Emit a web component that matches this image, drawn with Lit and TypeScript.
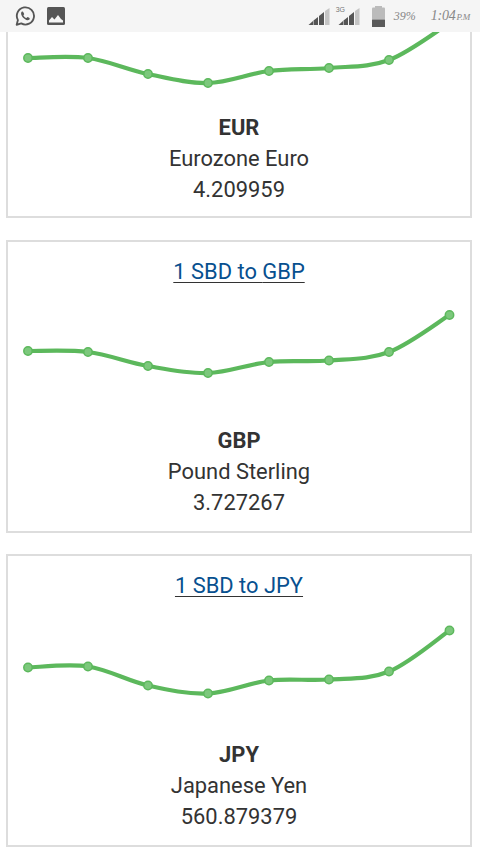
import { LitElement, html, css, svg } from "lit";
import { customElement } from "lit/decorators.js";

const XS = [20, 80, 140, 200, 261, 321, 381, 441.5];

interface Card { code: string; name: string; value: string; ys: number[]; link: boolean; }

const CARDS: Card[] = [
  { code: "EUR", name: "Eurozone Euro", value: "4.209959", ys: [79, 79, 95, 104, 92, 89, 81, 44], link: false },
  { code: "GBP", name: "Pound Sterling", value: "3.727267", ys: [59, 60, 74, 81, 70, 68.5, 60, 23], link: true },
  { code: "JPY", name: "Japanese Yen", value: "560.879379", ys: [61.5, 60.5, 79.5, 87.5, 74.5, 73.5, 65.5, 24.5], link: true },
];

function curve(ys: number[]): string {
  const pts = ys.map((y, i) => [XS[i], y]);
  let d = `M${pts[0][0]} ${pts[0][1]}`;
  for (let i = 0; i < pts.length - 1; i++) {
    const p0 = pts[Math.max(0, i - 1)];
    const p1 = pts[i];
    const p2 = pts[i + 1];
    const p3 = pts[Math.min(pts.length - 1, i + 2)];
    const k = 0.17;
    d += ` C${p1[0] + (p2[0] - p0[0]) * k} ${p1[1] + (p2[1] - p0[1]) * k} ${p2[0] - (p3[0] - p1[0]) * k} ${p2[1] - (p3[1] - p1[1]) * k} ${p2[0]} ${p2[1]}`;
  }
  return d;
}

const signal = svg`
  <polygon points="0.500,17 5,13 5,17" fill="#555"></polygon>
  <polygon points="5.500,17 5.500,12.500 10,9 10,17" fill="#555"></polygon>
  <polygon points="11,17 11,8 16,4 16,17" fill="#555"></polygon>
  <polygon points="17,17 17,3 21.500,0 21.500,17" fill="#c4c4c4"></polygon>
`;

@customElement("app-root")
export class AppRoot extends LitElement {
  static styles = css`
    :host { display: flex; flex-direction: column; width: 480px; height: 854px; overflow: hidden; background: #fff; font-family: Roboto, "Liberation Sans", sans-serif; color: #333; }
    .status { flex: none; height: 32px; background: #f5f5f5; display: flex; align-items: center; padding: 0 10px 0 15px; }
    .left { display: flex; align-items: center; gap: 12px; }
    .right { margin-left: auto; display: flex; align-items: center; color: #888; font-family: "Liberation Serif", serif; font-style: italic; white-space: nowrap; }
    .sig { display: block; }
    .net-wrap { position: relative; display: flex; margin-left: 8px; }
    .g3 { font: 400 7px/8px "Liberation Sans", sans-serif; position: absolute; left: -2px; top: -2px; color: #777; }
    .batt { margin-left: 12px; display: block; }
    .pct { font-size: 12px; margin-left: 9px; }
    .time { font-size: 14px; margin-left: 15px; letter-spacing: -0.2px; }
    .time small { font-size: 9px; margin-left: 1px; }
    .feed { flex: 1; min-height: 0; overflow: hidden; display: flex; flex-direction: column; gap: 21.6px; padding: 0 8px 0 6px; }
    .card { flex: none; height: 293px; box-sizing: border-box; border: 2px solid #ddd; display: flex; flex-direction: column; align-items: center; }
    .card.cut { height: 186px; border-top: 0; overflow: hidden; justify-content: flex-end; padding-bottom: 11px; }
    .link { margin-top: 18px; height: 24px; line-height: 24px; font-size: 21.9px; color: #07508f; text-decoration: underline; text-decoration-color: #333; text-underline-offset: 3px; text-decoration-thickness: 1px; white-space: nowrap; }
    .chart { display: block; margin-top: 8px; flex: none; }
    .code, .name, .value { flex: none; height: 31px; line-height: 31px; font-size: 21.9px; text-align: center; }
    .code { font-weight: 700; margin-top: 3px; }
  `;

  private chart(ys: number[]) {
    return html`<svg class="chart" width="462" height="130" viewBox="0 0 462 130">
      <path d=${curve(ys)} fill="none" stroke="#5cb85c" stroke-width="4.2" stroke-linecap="round"></path>
      ${ys.map((y, i) => svg`<circle cx=${XS[i]} cy=${y} r="4.200" fill="#7cc87c" stroke="#5cb85c" stroke-width="1.500"></circle>`)}
    </svg>`;
  }

  render() {
    return html`
      <div class="status">
        <div class="left">
          <svg width="20" height="20" viewBox="0 0 24 24" fill="none" aria-label="WhatsApp">
            <path d="M2 22.500l1.500-5.600A10.300 10.300 0 1 1 7.500 20.900z" stroke="#555" stroke-width="2.200" stroke-linejoin="round"></path>
            <path d="M8.800 6.700c-.6 0-1.500.8-1.500 2.300 0 3.100 4.200 7.600 7.600 8 1.600.2 2.800-1 2.800-2.100 0-.4-2.400-1.700-2.800-1.600-.4.1-.8 1.100-1.200 1.200-1 .2-3.600-2.400-3.600-3.400 0-.4.900-.9.900-1.300 0-.4-1.100-3.100-2.200-3.100z" fill="#555"></path>
          </svg>
          <svg width="18" height="18" viewBox="0 0 18 18" aria-label="Picture">
            <rect width="18" height="18" rx="1.500" fill="#555"></rect>
            <path d="M2 15.500v-2l3-3.500 2.500 2.500 3.500-4.500 3 4 2 1.500v2z" fill="#f5f5f5"></path>
          </svg>
        </div>
        <div class="right">
          <svg class="sig" width="22" height="17" viewBox="0 0 22 17">${signal}</svg>
          <div class="net-wrap">
            <svg class="sig" width="22" height="17" viewBox="0 0 22 17">${signal}</svg>
            <span class="g3">3G</span>
          </div>
          <svg class="batt" width="13" height="21" viewBox="0 0 13 21">
            <rect x="3" y="0" width="7" height="2" fill="#bbb"></rect>
            <rect x="0" y="1.500" width="13" height="12" rx="1" fill="#bbb"></rect>
            <rect x="0" y="13.500" width="13" height="7.500" fill="#5a5a5a"></rect>
          </svg>
          <span class="pct">39%</span>
          <span class="time">1:04<small>P.M</small></span>
        </div>
      </div>
      <div class="feed">
        ${CARDS.map((c) => html`
          <section class="card ${c.link ? "" : "cut"}">
            ${c.link ? html`<a class="link">1 SBD to ${c.code}</a>` : ""}
            ${this.chart(c.ys)}
            <div class="code">${c.code}</div>
            <div class="name">${c.name}</div>
            <div class="value">${c.value}</div>
          </section>
        `)}
      </div>
    `;
  }
}
